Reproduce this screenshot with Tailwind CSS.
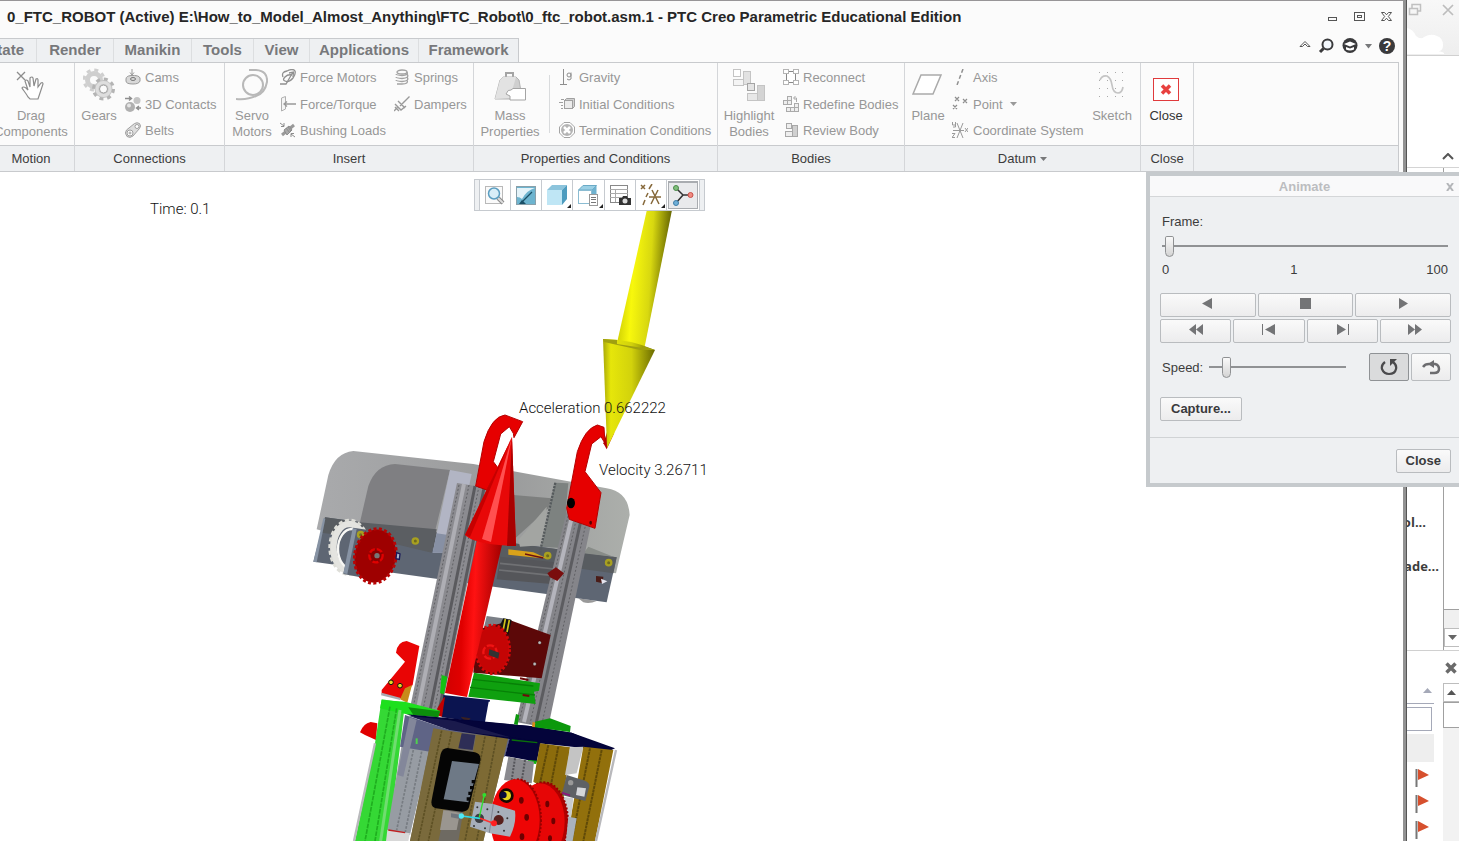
<!DOCTYPE html>
<html lang="en">
<head>
  <meta charset="UTF-8" />
  <meta name="viewport" content="width=device-width, initial-scale=1.0" />
  <title>PTC Creo Parametric Educational Edition</title>
  <script src="https://cdn.jsdelivr.net/npm/@tailwindcss/browser@4"></script>
</head>
<body class="relative flex h-screen overflow-hidden bg-white font-['Liberation_Sans',Arial,sans-serif] text-[13px] leading-4 text-[#3c3c3c]">

  <!-- Creo window -->
  <div class="flex min-w-0 flex-1 flex-col overflow-hidden border-t border-[#979597] bg-[#fbfbfb]">

    <header class="flex h-[37px] shrink-0 items-start justify-between pt-[6px] pl-[7px] pr-[10px]">
      <h1 class="text-[15px] leading-5 font-bold whitespace-nowrap text-[#262626]">0_FTC_ROBOT (Active) E:\How_to_Model_Almost_Anything\FTC_Robot\0_ftc_robot.asm.1 - PTC Creo Parametric Educational Edition</h1>
      <div class="flex gap-[14px] pt-[3px]">
        <button aria-label="Minimize"><svg class="h-[13px] w-[13px]" viewBox="0 0 13 13"><rect x="2.500" y="7.500" width="8" height="3" fill="none" stroke="#555"/></svg></button>
        <button aria-label="Maximize"><svg class="h-[13px] w-[13px]" viewBox="0 0 13 13" fill="none" stroke="#555"><rect x="1.500" y="2.500" width="10" height="8"/><rect x="4.500" y="5.500" width="4" height="2"/></svg></button>
        <button aria-label="Close window"><svg class="h-[13px] w-[13px]" viewBox="0 0 13 13"><path d="M1.500 2.500H4.500L6.500 4.800L8.500 2.500H11.500L8.300 6.500L11.500 10.500H8.500L6.500 8.200L4.500 10.500H1.500L4.700 6.500Z" fill="#fff" stroke="#555"/></svg></button>
      </div>
    </header>

    <!-- Ribbon tabs -->
    <div class="flex h-6 shrink-0 justify-between pr-2">
      <nav class="-ml-3 flex border-t border-r border-[#c8cacd] bg-[#eef0f2] text-[15px] leading-[22px] font-bold text-[#77787b]">
        <a href="#" class="w-[49px] border-r border-[#dcdee0] pr-3 text-right">tate</a>
        <a href="#" class="w-[77px] border-r border-[#dcdee0] text-center">Render</a>
        <a href="#" class="w-[78px] border-r border-[#dcdee0] text-center">Manikin</a>
        <a href="#" class="w-[62px] border-r border-[#dcdee0] text-center">Tools</a>
        <a href="#" class="w-[56px] border-r border-[#dcdee0] text-center">View</a>
        <a href="#" class="w-[109px] border-r border-[#dcdee0] text-center">Applications</a>
        <a href="#" class="w-[99px] text-center">Framework</a>
      </nav>
      <div class="flex h-4 items-center gap-[7px]">
        <button aria-label="Minimize ribbon"><svg class="h-4 w-3" viewBox="0 0 12 16" fill="none" stroke="#555"><path d="M1 8.500L6 3.500L11 8.500H8.500L6 6L3.500 8.500Z"/></svg></button>
        <button aria-label="Search"><svg class="h-4 w-4" viewBox="0 0 16 16" fill="#f3f8fd" stroke="#3a3a3c"><circle cx="9.500" cy="6.500" r="5" stroke-width="2"/><path d="M5.500 10.500L2 14" stroke-width="3"/></svg></button>
        <div class="flex items-center gap-[6px]">
          <button aria-label="Learning"><svg class="h-4 w-[18px]" viewBox="0 0 18 16"><circle cx="9" cy="7.500" r="7.500" fill="#3a3a3c"/><path d="M3 6L9 3.500L15 6L9 8.500ZM5 9L9 10.500L13 9V11.500Q9 13.500 5 11.500Z" fill="#fff"/></svg></button>
          <svg class="h-[5px] w-[7px]" viewBox="0 0 7 5"><path d="M0 0H7L3.500 4.500Z" fill="#77787a"/></svg>
        </div>
        <button aria-label="Help" class="flex h-4 w-4 items-center justify-center rounded-full bg-[#3a3a3c] text-[14px] leading-4 font-bold text-white">?</button>
      </div>
    </div>

    <!-- Ribbon -->
    <div class="mr-1 flex h-[110px] shrink-0 border border-l-0 border-[#c8cacd] whitespace-nowrap text-[#979797] [&_span]:pt-[2px]">
      <section class="-ml-3 flex w-[87px] shrink-0 flex-col border-r border-[#d4d6d9]">
        <div class="flex h-[82px] justify-center">
          <button class="flex w-[86px] flex-col items-center pt-[5px]">
            <svg class="mb-1 h-[34px] w-8" viewBox="0 0 32 34" fill="none" stroke="#8c8c8c"><path d="M2 4L10 12M10 4L2 12" stroke-width="1.300"/><path d="M13 29C11 25 8 22 7 20Q8 18 11 20L13 22L10 13Q11 11 13 13L15 19L15 10Q17 8 18 10L19 18L21 11Q23 10 23 12L23 19L26 15Q28 14 28 16L25 25Q24 28 23 31H15Z" fill="#fff" stroke-width="1.200"/></svg>
            <span>Drag<br>Components</span>
          </button>
        </div>
        <h2 class="h-[26px] border-t border-[#c8cacd] bg-[#eef0f2] text-center leading-[25px] text-[#3c3c3c]">Motion</h2>
      </section>

      <section class="flex w-[150px] shrink-0 flex-col border-r border-[#d4d6d9]">
        <div class="flex h-[82px]">
          <button class="flex w-12 flex-col items-center pt-[5px]">
            <svg class="mb-1 h-[34px] w-8" viewBox="0 0 32 34" fill="none"><circle cx="11" cy="12" r="6.500" stroke="#cfcfcf" stroke-width="5"/><circle cx="11" cy="12" r="10" stroke="#cfcfcf" stroke-width="3" stroke-dasharray="4 3.850"/><circle cx="20.500" cy="21" r="9" fill="#c6c6c6"/><circle cx="20.500" cy="21" r="10" stroke="#b4b4b4" stroke-width="3" stroke-dasharray="4 3.850"/><circle cx="20.500" cy="21" r="6.500" stroke="#dedede" stroke-width="3"/><circle cx="20.500" cy="21" r="4" fill="#fbfbfb" stroke="#a4a4a4"/></svg>
            <span>Gears</span>
          </button>
          <div class="ml-[2px] flex flex-col">
            <button class="flex h-[28px] items-center gap-1"><svg class="h-4 w-4" viewBox="0 0 16 16" fill="none" stroke="#999"><path d="M7 0V5M5 3.500L7 6L9 3.500"/><path d="M1 10Q1 7 6 6.500Q14 6 15 9V12Q14 15 8 15Q1 15 1 12Z" fill="#d8d8d8"/><ellipse cx="8" cy="10" rx="2.500" ry="1.500" stroke="#777"/></svg><span>Cams</span></button>
            <button class="flex h-[26px] items-center gap-1"><svg class="h-4 w-4" viewBox="0 0 16 16" fill="none" stroke="#8e8e8e"><circle cx="12" cy="4.500" r="3.500" fill="#c4c4c4" stroke="none"/><circle cx="5" cy="11" r="5" fill="#b0b0b0" stroke="none"/><circle cx="4" cy="9.500" r="2" fill="#e5e5e5" stroke="none"/><path d="M0 2.500H6M4 0.500L6.500 2.500L4 4.500M16 12H11.500M14 10L11.500 12L14 14" stroke-width="1.400"/></svg><span>3D Contacts</span></button>
            <button class="flex h-[26px] items-center gap-1"><svg class="h-4 w-4" viewBox="0 0 16 16" stroke="#a0a0a0"><path d="M1.500 8L9.500 1.500Q12 0 14.500 1.500Q16.500 4 14.500 6.500L8 14Q5 16.500 2 14.500Q-1 11 1.500 8Z" fill="#ddd"/><circle cx="12" cy="4.500" r="2" fill="#fff"/><circle cx="5" cy="11" r="3" fill="#fff"/><circle cx="5" cy="11" r="1" fill="none"/></svg><span>Belts</span></button>
          </div>
        </div>
        <h2 class="h-[26px] border-t border-[#c8cacd] bg-[#eef0f2] text-center leading-[25px] text-[#3c3c3c]">Connections</h2>
      </section>

      <section class="flex w-[249px] shrink-0 flex-col border-r border-[#d4d6d9]">
        <div class="flex h-[82px]">
          <button class="flex w-[54px] flex-col items-center pt-[5px]">
            <svg class="mb-1 h-[34px] w-8" viewBox="0 0 32 34" fill="none" stroke="#b8b8b8" stroke-width="2"><path d="M13 2H20Q32 3 31 14Q29 25 20 28Q12 32 0 31"/><circle cx="17" cy="17" r="10"/></svg>
            <span>Servo<br>Motors</span>
          </button>
          <div class="ml-px flex w-[114px] flex-col">
            <button class="flex h-[28px] items-center gap-1"><svg class="h-4 w-4" viewBox="0 0 16 16" fill="none" stroke="#909090" stroke-width="1.300"><path d="M3 8Q1 3 7 2Q13 -1 15 2Q16 5 13 9Q9 14 5 12Q2 11 5 8Q8 5 12 6"/><path d="M0 15H6L13 3M9 4L13.500 3L13 8"/></svg><span>Force Motors</span></button>
            <button class="flex h-[26px] items-center gap-1"><svg class="h-4 w-4" viewBox="0 0 16 16" fill="none" stroke="#999"><path d="M1.500 2L5.500 0.500V13L1.500 15Z" fill="#f4f4f4" stroke="#b0b0b0"/><path d="M4 8H16M7 5.500L4 8L7 10.500" stroke-width="1.300"/></svg><span>Force/Torque</span></button>
            <button class="flex h-[26px] items-center gap-1"><svg class="h-4 w-4" viewBox="0 0 16 16" fill="none" stroke="#8c8c8c"><path d="M2 13L14 3" stroke="#999" stroke-width="3"/><path d="M4 8L9 4L12 8L7 13Z" fill="#a8a8a8" stroke="#8c8c8c"/><path d="M6 6L10 11M8 5L11 9"/><path d="M0 1L4 4M4 1V4.500H1M15 15L11 12M11 15V11.500H14"/></svg><span>Bushing Loads</span></button>
          </div>
          <div class="flex flex-col">
            <button class="flex h-[28px] items-center gap-1"><svg class="h-4 w-4" viewBox="0 0 16 16" fill="none" stroke="#a2a2a2" stroke-width="1.300"><ellipse cx="8" cy="3" rx="5" ry="2"/><path d="M13 3Q15 6 8 6.500Q2 6 2 5M13 5Q16 9 8 9.500Q2 9 2 8M13 8Q16 12 8 12.500Q2 12 2 11M13 11Q15 15 8 15H3"/></svg><span>Springs</span></button>
            <button class="flex h-[26px] items-center gap-1"><svg class="h-4 w-4" viewBox="0 0 16 16" fill="none" stroke="#999" stroke-width="1.400"><path d="M15.500 0.500L8 8M4 5L11 12M6 10L10 6M1 8L7 14L12 10M1 11L5 15M0 15L4 11"/></svg><span>Dampers</span></button>
          </div>
        </div>
        <h2 class="h-[26px] border-t border-[#c8cacd] bg-[#eef0f2] text-center leading-[25px] text-[#3c3c3c]">Insert</h2>
      </section>

      <section class="flex w-[244px] shrink-0 flex-col border-r border-[#d4d6d9]">
        <div class="flex h-[82px]">
          <button class="flex w-[72px] flex-col items-center pt-[5px]">
            <svg class="mb-1 h-[34px] w-8" viewBox="0 0 32 34" stroke="#a4a4a4"><path d="M12 9V5H19V9" fill="none" stroke-width="2"/><path d="M6 12L9 9H22L25 12L28 29L20 31H1Z" fill="#cfcfcf" stroke="#b4b4b4"/><path d="M9 9L6 12L1 31L16 30L22 9Z" fill="#e2e2e2" stroke="none"/><path d="M17 22Q14 21 12 26L16 28V32H31.500V20.500H19Z" fill="#fff"/></svg>
            <span>Mass<br>Properties</span>
          </button>
          <div class="mt-3 ml-[3px] h-[58px] w-px bg-[#d9dbdd]"></div>
          <div class="ml-[9px] flex flex-col">
            <button class="flex h-[28px] items-center gap-1"><svg class="h-4 w-4" viewBox="0 0 16 16" fill="none" stroke="#8e8e8e"><path d="M4.500 0V15M1 15.500H8"/><circle cx="10" cy="6" r="2"/><path d="M12 3.500V10Q10 12 8 10"/></svg><span>Gravity</span></button>
            <button class="flex h-[26px] items-center gap-1"><svg class="h-4 w-4" viewBox="0 0 16 16" stroke="#a0a0a0"><path d="M5.500 4.500L7.500 2.500H15.500V10.500L13.500 12.500H5.500Z" fill="#d0d0d0"/><rect x="5.500" y="4.500" width="8" height="8" fill="#ececec"/><path d="M2 3.500H5M0 6.500H4M2 9.500H4M2 12.500H4" fill="none"/></svg><span>Initial Conditions</span></button>
            <button class="flex h-[26px] items-center gap-1"><svg class="h-4 w-4" viewBox="0 0 16 16"><path d="M5 0.500H11L15.500 5V11L11 15.500H5L0.500 11V5Z" fill="#fff" stroke="#a4a4a4"/><circle cx="8" cy="8" r="6" fill="#b4b4b4"/><path d="M5 5L11 11M11 5L5 11" stroke="#fff" stroke-width="2.500"/></svg><span>Termination Conditions</span></button>
          </div>
        </div>
        <h2 class="h-[26px] border-t border-[#c8cacd] bg-[#eef0f2] text-center leading-[25px] text-[#3c3c3c]">Properties and Conditions</h2>
      </section>

      <section class="flex w-[187px] shrink-0 flex-col border-r border-[#d4d6d9]">
        <div class="flex h-[82px]">
          <button class="flex w-[62px] flex-col items-center pt-[5px]">
            <svg class="mb-1 h-[34px] w-8" viewBox="0 0 32 34" stroke="#c4c4c4"><rect x="0.500" y="1.500" width="7" height="7" fill="#fff"/><rect x="10.500" y="3.500" width="7" height="13" fill="#e2e2e2"/><rect x="0.500" y="11.500" width="10" height="6" fill="#f4f4f4"/><rect x="24.500" y="17.500" width="7" height="15" fill="#d4d4d4"/><rect x="14.500" y="25.500" width="10" height="7" fill="#e8e8e8"/><rect x="14.500" y="15.500" width="7" height="7" fill="#e4e4e4" stroke="#a4a4a4"/></svg>
            <span>Highlight<br>Bodies</span>
          </button>
          <div class="ml-[3px] flex flex-col">
            <button class="flex h-[28px] items-center gap-1"><svg class="h-4 w-4" viewBox="0 0 16 16" fill="#fff" stroke="#b4b4b4"><rect x="3.500" y="2.500" width="9" height="11" stroke="#888"/><rect x="0.500" y="0.500" width="5" height="4"/><rect x="10.500" y="0.500" width="5" height="4"/><rect x="0.500" y="11.500" width="5" height="4"/><rect x="10.500" y="11.500" width="5" height="4"/></svg><span>Reconnect</span></button>
            <button class="flex h-[26px] items-center gap-1"><svg class="h-4 w-4" viewBox="0 0 16 16" fill="#eee" stroke="#aaa"><rect x="4.500" y="0.500" width="4" height="4"/><rect x="0.500" y="4.500" width="4" height="4"/><rect x="4.500" y="4.500" width="4" height="4"/><rect x="3.500" y="11.500" width="4" height="4"/><rect x="7.500" y="11.500" width="4" height="4"/><rect x="11.500" y="11.500" width="4" height="4"/><rect x="11.500" y="7.500" width="4" height="4"/><path d="M13.500 6V2H11M12.500 0L10.500 2L12.500 4" fill="none"/></svg><span>Redefine Bodies</span></button>
            <button class="flex h-[26px] items-center gap-1"><svg class="h-4 w-4" viewBox="0 0 16 16" stroke="#a8a8a8"><rect x="3.500" y="1.500" width="5" height="5" fill="#eee"/><rect x="9.500" y="3.500" width="5" height="11" fill="#d0d0d0"/><rect x="2.500" y="9.500" width="7" height="5" fill="#eee"/></svg><span>Review Body</span></button>
          </div>
        </div>
        <h2 class="h-[26px] border-t border-[#c8cacd] bg-[#eef0f2] text-center leading-[25px] text-[#3c3c3c]">Bodies</h2>
      </section>

      <section class="flex w-[236px] shrink-0 flex-col border-r border-[#d4d6d9]">
        <div class="flex h-[82px]">
          <button class="flex w-[46px] flex-col items-center pt-[5px]">
            <svg class="mb-1 h-[34px] w-8" viewBox="0 0 32 34"><path d="M9 7H29L21 26H1Z" fill="#fff" stroke="#aaa" stroke-width="1.500"/></svg>
            <span>Plane</span>
          </button>
          <div class="ml-px flex w-[136px] flex-col">
            <button class="flex h-[28px] items-center gap-[5px]"><svg class="h-4 w-4" viewBox="0 0 16 16"><path d="M11 0L5 16" fill="none" stroke="#909090" stroke-width="1.500" stroke-dasharray="4 2.500"/></svg><span>Axis</span></button>
            <button class="flex h-[26px] items-center gap-[5px]"><svg class="h-4 w-4" viewBox="0 0 16 16" fill="none" stroke="#8e8e8e" stroke-width="1.200"><path d="M3 1L7 5M7 1L3 5M11 3L15 7M15 3L11 7M1 9L5 13M5 9L1 13"/></svg><span>Point</span><svg class="ml-[2px] h-1 w-[7px]" viewBox="0 0 7 4"><path d="M0 0H7L3.500 4Z" fill="#999"/></svg></button>
            <button class="flex h-[26px] items-center gap-[5px]"><svg class="h-4 w-4" viewBox="0 0 16 16" fill="none" stroke="#9a9a9a"><path d="M1 8.500H12M5 1L11 16M11 1L5 16M13 6L16 10M16 6L13 10M0.500 0V3H3.500M3.500 0V5H1M0 11.500H3L0 15.500H3"/></svg><span>Coordinate System</span></button>
          </div>
          <button class="flex w-12 flex-col items-center pt-[5px]">
            <svg class="mb-1 h-[34px] w-8" viewBox="0 0 32 34" fill="none"><path d="M3.500 4V30M11.500 4V30M19.500 4V30M26.500 4V30" stroke="#aaa" stroke-dasharray="1 7"/><path d="M4 12Q6 7 11 8Q15 10 16 17Q17 25 22 25Q26 25 27 19" stroke="#c4c4c4" stroke-width="1.700"/></svg>
            <span>Sketch</span>
          </button>
        </div>
        <h2 class="flex h-[26px] items-center justify-center gap-1 border-t border-[#c8cacd] bg-[#eef0f2] text-[#3c3c3c]">Datum <svg class="h-1 w-[7px]" viewBox="0 0 7 4"><path d="M0 0H7L3.500 4Z" fill="#77787a"/></svg></h2>
      </section>

      <section class="flex w-[53px] shrink-0 flex-col border-r border-[#d4d6d9]">
        <div class="flex h-[82px]">
          <button class="flex w-[50px] flex-col items-center pt-[5px] text-[#333]">
            <svg class="mb-1 h-[34px] w-8" viewBox="0 0 32 34"><rect x="3.500" y="10.500" width="25" height="22" fill="#fff" stroke="#e03a3c"/><path d="M12 17.500L20 25.500M20 17.500L12 25.500" stroke="#e8413f" stroke-width="3.500"/></svg>
            <span>Close</span>
          </button>
        </div>
        <h2 class="h-[26px] border-t border-[#c8cacd] bg-[#eef0f2] text-center leading-[25px] text-[#3c3c3c]">Close</h2>
      </section>

      <div class="flex flex-1 flex-col justify-end">
        <div class="h-[26px] border-t border-[#c8cacd] bg-[#eef0f2]"></div>
      </div>
    </div>

    <!-- Graphics area -->
    <main class="relative min-h-0 flex-1 overflow-hidden bg-white font-['Roboto','Liberation_Sans',sans-serif] text-[15px] leading-5 font-light text-[#111]">

      <svg class="absolute top-0 left-[300px] h-[669px] w-[430px]" viewBox="300 172 430 669">
        <defs>
          <linearGradient id="yshaft" x1="0" x2="1" y1="0" y2="0.150"><stop offset="0" stop-color="#b8b800"/><stop offset="0.350" stop-color="#f8f80c"/><stop offset="0.650" stop-color="#d8d810"/><stop offset="1" stop-color="#5a5a00"/></linearGradient>
          <linearGradient id="ycone" x1="0" x2="1"><stop offset="0" stop-color="#a8a808"/><stop offset="0.150" stop-color="#e6e60a"/><stop offset="0.550" stop-color="#d2d20c"/><stop offset="1" stop-color="#6a6a00"/></linearGradient>
          <linearGradient id="rshaft" x1="0" x2="1" y1="0" y2="0.100"><stop offset="0" stop-color="#c00"/><stop offset="0.350" stop-color="#e00000"/><stop offset="0.550" stop-color="#ff1212"/><stop offset="1" stop-color="#a00000"/></linearGradient>
          <linearGradient id="glass" x1="0" x2="1"><stop offset="0" stop-color="#a9aaac"/><stop offset="0.600" stop-color="#9a9b9c"/><stop offset="1" stop-color="#acafab"/></linearGradient>
        </defs>

        <!-- intake housing -->
        <g transform="translate(300 400) scale(0.33333)">
          <path d="M835 595L850 607Q870 612 890 603Z" fill="#999"/>
          <path d="M50 388L85 225Q105 158 160 153L520 192L920 265Q985 275 989 345L948 520L75 395Z" fill="url(#glass)"/>
          <path d="M75 352L950 472L920 607L40 485Z" fill="#5e6673"/>
          <path d="M75 352L950 472L940 520L65 398Z" fill="#585c60"/>
          <path d="M178 375L205 258Q228 194 285 192L450 210L400 415Z" fill="#7f7f82"/>
          <path d="M178 367L410 388L395 458L150 400Z" fill="#5b5e62"/>
          <path d="M450 210L515 222L465 458L398 458Z" fill="#b2b5c4"/>
          <path d="M410 400L480 410L465 458L398 458Z" fill="#8790a4"/>
          <path d="M640 285L755 295L745 325L640 420Z" fill="#7d7f7e"/>
          <path d="M740 320L735 435L660 440L655 420Z" fill="#a3a5a2"/>
          <path d="M765 248L805 250L800 300L795 445L725 440Z" fill="#7d8280"/>
          <path d="M766 248L718 465" stroke="#555a5c" stroke-width="7" stroke-dasharray="7 3" fill="none"/>
          <path d="M40 485L70 355L76 356L50 487Z" fill="#8793a4"/>
          <ellipse cx="148" cy="442" rx="48" ry="70" fill="#5e6673" stroke="#e4e4e0" stroke-width="20"/>
          <ellipse cx="148" cy="442" rx="59" ry="82" fill="none" stroke="#deded8" stroke-width="8" stroke-dasharray="12 8"/>
          <ellipse cx="156" cy="447" rx="42" ry="60" fill="#5e6673" stroke="#f8f8f5" stroke-width="7"/>
          <path d="M160 383L260 398L225 540L130 522Z" fill="#5b6370"/>
          <path d="M158 385L170 387L142 522L130 520Z" fill="#8793a4"/>
          <g fill="#6f6a20" stroke="#a8a020" stroke-width="7"><circle cx="182" cy="404" r="8"/><circle cx="346" cy="423" r="8"/><circle cx="743" cy="467" r="8"/><circle cx="926" cy="488" r="8"/></g>
          <g transform="rotate(10 226 468)"><ellipse cx="226" cy="468" rx="62" ry="80" fill="#9e0000"/><ellipse cx="226" cy="468" rx="62" ry="82" fill="none" stroke="#b80404" stroke-width="9" stroke-dasharray="9 7"/></g>
          <ellipse cx="228" cy="467" rx="20" ry="20" fill="#8a0000" stroke="#e00000" stroke-width="7" stroke-dasharray="18 6"/>
          <circle cx="231" cy="467" r="8" fill="#777"/>
          <path d="M290 458L300 462L298 478L288 476Z" fill="#aab4c8" stroke="#1a1a5a" stroke-width="4"/>
          <path d="M865 440L940 470L850 460Z" fill="#888c88"/>
          <path d="M600 470L795 490L790 555L590 538Z" fill="#55565a"/>
          <path d="M600 490L792 510M597 510L790 530" stroke="#707174" stroke-width="5"/>
          <path d="M625 448L700 457L740 475L710 473L625 464Z" fill="#d9a21a"/>
          <path d="M675 462L730 474" stroke="#6e1010" stroke-width="4"/>
        </g>

        <!-- right lift rail -->
        <path d="M567 510L591 524L548 728L516 722L545 600Z" fill="#85858a"/>
        <path d="M573 512L524 722" stroke="#b4b4bc" stroke-width="4"/>
        <path d="M581 520L536 724" stroke="#5c5c60" stroke-width="3"/>
        <g fill="none" stroke="#606064" stroke-width="1" stroke-dasharray="2 2"><path d="M569 512L519 722M577 516L530 724M586 523L541 728"/></g>
        <!-- left lift rail -->
        <path d="M457 483L487 488L441 712L410 708Z" fill="#8b8b90"/>
        <path d="M464 484L418 709" stroke="#aeaeb4" stroke-width="4"/>
        <path d="M475 486L430 711M484 488L439 711" stroke="#5a5a5e" stroke-width="3"/>
        <g fill="none" stroke="#606064" stroke-width="1" stroke-dasharray="2 2"><path d="M459 485L413 708M469 485L423 710M479 486L434 712"/></g>

        <!-- hooks -->
        <g transform="translate(300 400) scale(0.33333)">
          <path d="M527 258L552 125Q575 50 615 45L668 65L642 113L640 100L628 80L602 102L580 185L595 205L560 270Z" fill="#e60000" stroke="#b40000" stroke-width="3"/>
          <path d="M800 325L832 155Q855 85 892 75L912 82L915 130L903 110L875 132L855 215L903 278L885 385L808 358Z" fill="#e60000" stroke="#b40000" stroke-width="3"/>
          <path d="M925 85L943 98L920 148L910 130Z" fill="#b40000"/>
          <ellipse cx="813" cy="309" rx="12" ry="16" fill="#000"/>
          <ellipse cx="872" cy="368" rx="4" ry="6" fill="#500"/>
          <path d="M742 520L768 502L792 520L772 543L750 532Z" fill="#7a0d0d"/>
          <path d="M888 528L910 530L908 550L888 545Z" fill="#4a1c18"/><path d="M903 536L922 544L906 552Z" fill="#e5e5ee"/>
        </g>

        <!-- gearbox -->
        <g transform="translate(350 600) scale(0.33333)">
          <path d="M410 48L482 58L480 110L400 90Z" fill="#7b8087"/>
          <path d="M375 90L485 62L602 105L575 235L370 218Z" fill="#5c0808"/>
          <path d="M460 55L485 60L475 105L450 75Z" fill="#111"/><path d="M466 57L460 88M478 60L471 96" stroke="#d2c21a" stroke-width="5"/>
          <ellipse cx="428" cy="148" rx="50" ry="70" fill="#c40505"/>
          <ellipse cx="428" cy="148" rx="51" ry="73" fill="none" stroke="#d40808" stroke-width="8" stroke-dasharray="8 6"/>
          <circle cx="420" cy="156" r="20" fill="none" stroke="#f01414" stroke-width="7" stroke-dasharray="22 6"/>
          <path d="M418 148L448 158L445 176L416 165Z" fill="#333"/>
          <circle cx="569" cy="128" r="5" fill="#bbb" stroke="#200"/><circle cx="554" cy="192" r="5" fill="#bbb" stroke="#200"/>
          <path d="M372 218L570 250L567 272L552 275L557 312L355 290Z" fill="#0fa00f"/>
          <path d="M368 238L550 258M360 262L555 285" stroke="#078007" stroke-width="4"/>
          <path d="M275 225L292 230L282 282L270 280Z" fill="#14c014"/>
          <path d="M510 235L535 240M518 285L538 288" stroke="#6e0a0a" stroke-width="6"/>
          <path d="M280 285L420 300L407 370L275 352Z" fill="#0b1450"/>
          <path d="M262 325L280 295L285 290L276 350L262 347Z" fill="#c00000"/>
          <path d="M416 305L508 316L498 378L405 366Z" fill="#fff"/>
          <path d="M332 350L362 355L350 370Z" fill="#3a2222"/>
          <path d="M95 270L165 185L138 158Q142 125 170 123L208 138L188 255L150 297L95 282Z" fill="#e90505"/>
          <path d="M95 278L150 293L150 300L93 286Z" fill="#a8a8b0"/>
          <path d="M165 265L186 255L172 308L150 298Z" fill="#c88a1a"/>
          <circle cx="123" cy="247" r="7" fill="#e8d820" stroke="#111" stroke-width="3"/><circle cx="150" cy="257" r="7" fill="#e8d820" stroke="#111" stroke-width="3"/>
          <path d="M30 397Q40 370 62 366L82 370L78 420L45 405Z" fill="#e00000"/>

          <!-- chassis -->
          <path d="M95 298L165 308L150 440L115 723H15L75 430Z" fill="#35d835"/>
          <path d="M95 300L165 305L270 332L265 350L180 345L90 325Z" fill="#1ee01e"/>
          <path d="M175 322L270 334L265 352L190 345Z" fill="#0c8e0c"/>
          <path d="M120 320L45 723M140 325L75 723" stroke="#1fae1f" stroke-width="5" stroke-dasharray="14 3"/>
          <path d="M150 330L92 723" stroke="#70dc70" stroke-width="9"/>
          <path d="M155 435L240 450L180 705L112 690Z" fill="#979ca3"/>
          <path d="M190 450L140 690M215 455L165 700" stroke="#777c82" stroke-width="5" stroke-dasharray="8 4"/>
          <path d="M112 690L180 700L175 723H108Z" fill="#d8d8d8"/><path d="M115 690L165 698" stroke="#c02020" stroke-width="4"/>
          <path d="M165 345L300 390L480 412L465 470L240 455L150 440Z" fill="#5f6486"/>
          <path d="M178 352L200 360L160 530L142 525Z" fill="#83879a"/>
          <path d="M200 415V432" stroke="#4fd04f" stroke-width="6"/>
          <path d="M250 390L475 410L400 723H180Z" fill="#6e6a62"/>
          <path d="M250 385L340 400L265 723H180Z" fill="#7a6a3c"/>
          <path d="M378 405L475 412L400 723H325Z" fill="#7d6a34"/>
          <path d="M275 392L205 723M305 396L235 723M405 410L345 723M440 410L380 723" stroke="#5d5024" stroke-width="5" stroke-dasharray="8 3"/>
          <path d="M335 400L376 405L368 450L325 445Z" fill="#2e2e56"/>
          <path d="M170 343L300 355L540 378L665 398L795 445L780 452L565 430L300 390Z" fill="#04043a"/>
          <path d="M175 347L480 380L478 412L300 390Z" fill="#1a1a4c"/>
          <path d="M290 356L540 378L665 398L780 448L480 412Z" fill="#04043a"/>
          <path d="M480 410L572 430L560 485L465 468Z" fill="#04043a"/>
          <path d="M485 420L562 428" stroke="#0a700a" stroke-width="4"/>
          <path d="M498 342L508 345L503 375L492 372ZM555 365L600 355L662 378L660 396L555 382Z" fill="#0c980c"/>
          <path d="M548 365L556 368L554 382L546 380Z" fill="#d88a1a"/>
          <path d="M535 480L562 482L558 492L530 488Z" fill="#10b010"/>
          <path d="M475 470L552 485L545 550L462 540Z" fill="#8a8a8f"/>
          <path d="M495 475L485 540M525 480L515 545" stroke="#55555a" stroke-width="6" stroke-dasharray="6 4"/>
          <path d="M570 430L660 442L640 600L550 545Z" fill="#8c6c0c"/>
          <path d="M660 442L700 440L680 520L645 525Z" fill="#c4c4c4"/>
          <path d="M700 440L790 450L735 723H650Z" fill="#92700c"/>
          <path d="M595 435L570 550M625 440L600 570M720 445L665 723M755 450L700 723" stroke="#604a08" stroke-width="6" stroke-dasharray="9 2"/>
          <path d="M640 590L670 595L655 723H620Z" fill="#c8ccd0"/>
          <path d="M798 450L738 723M75 430L12 723" stroke="#b9b9bc" stroke-width="7" fill="none"/>
          <path d="M650 525L705 542Q720 548 718 560L706 603L635 585Z" fill="#5e6165"/>
          <path d="M682 562L708 565L703 590L678 585Z" fill="#d5d7da"/><circle cx="662" cy="548" r="8" fill="#999"/>
          <path d="M635 578L660 586" stroke="#8a1a7a" stroke-width="5"/>

          <!-- phone -->
          <path d="M292 444L375 457Q394 462 391 482L357 622Q352 636 335 635L258 625Q241 621 245 600L272 462Q277 444 292 444Z" fill="#050505"/>
          <path d="M306 483L387 492L355 607L281 598Z" fill="#6e7986"/>
          <path d="M365 540H376V550H365ZM360 558H371V568H360ZM355 575H366V585H355ZM350 592H361V602H350Z" fill="#050505"/>
          <path d="M280 630L330 638L320 690L270 690Z" fill="#9a9690"/>

          <!-- wheels -->
          <ellipse cx="582" cy="665" rx="72" ry="118" fill="#b00000" stroke="#980000" stroke-width="6" stroke-dasharray="6 5"/>
          <ellipse cx="570" cy="665" rx="74" ry="115" fill="#e60606"/>
          <ellipse cx="505" cy="660" rx="68" ry="122" fill="#a80000" stroke="#980000" stroke-width="6" stroke-dasharray="6 5"/>
          <ellipse cx="495" cy="660" rx="74" ry="122" fill="#ee0505"/>
          <g fill="#6e0000"><ellipse cx="514" cy="601" rx="7" ry="10"/><ellipse cx="530" cy="652" rx="7" ry="10"/><ellipse cx="516" cy="710" rx="7" ry="10"/><ellipse cx="592" cy="612" rx="6" ry="10"/><ellipse cx="610" cy="663" rx="6" ry="10"/><ellipse cx="600" cy="715" rx="6" ry="9"/></g>
          <circle cx="469" cy="587" r="22" fill="#160a00"/><circle cx="469" cy="587" r="14" fill="#e8d41c"/><circle cx="460" cy="585" r="10" fill="#0a0a3a"/>
          <path d="M655 650L680 655L668 723H648Z" fill="#a9b2bd"/>

          <!-- brackets and triad -->
          <path d="M375 605L430 612L495 632Q500 670 480 710L420 700L360 680Z" fill="#a7afba"/>
          <path d="M430 612L418 698" stroke="#7f8792" stroke-width="3"/>
          <circle cx="388" cy="655" r="14" fill="#3d3f44"/><circle cx="446" cy="660" r="15" fill="#58201c"/>
          <g fill="#333"><circle cx="382" cy="622" r="3"/><circle cx="412" cy="628" r="3"/><circle cx="372" cy="678" r="3"/><circle cx="405" cy="685" r="3"/><circle cx="445" cy="636" r="3"/><circle cx="472" cy="655" r="3"/><circle cx="462" cy="692" r="3"/></g>
          <path d="M303 640L335 645L333 658L303 652Z" fill="#70757c"/>
          <path d="M335 648L390 655" stroke="#30d8e8" stroke-width="5"/><circle cx="334" cy="648" r="8" fill="#50e8f4"/>
          <path d="M403 585L388 652" stroke="#30e030" stroke-width="4"/><circle cx="403" cy="585" r="6" fill="#30e030"/>
          <path d="M390 655L430 670" stroke="#ff3030" stroke-width="5"/><circle cx="432" cy="670" r="9" fill="#ff2020"/>
        </g>

        <!-- acceleration arrow -->
        <path d="M477 540L502 545L467 697L445 693Z" fill="url(#rshaft)"/>
        <path d="M512 437L465 535Q475 545 516 546Z" fill="#e80808"/>
        <path d="M512 437L482 539L491 542Z" fill="#ff5050"/>
        <path d="M512 437L465 535L470 537Z" fill="#c60000"/>
        <path d="M512 437L507 546L516 546Z" fill="#a80000"/>

        <!-- velocity arrow -->
        <path d="M648 205H673L644 350L617 343Z" fill="url(#yshaft)"/>
        <path d="M603 339Q630 339 655 350L607 448Z" fill="url(#ycone)"/>
        <path d="M603 339L617 340V344L643 348V346L655 350L640 350L604 342Z" fill="#a0a010"/>
      </svg>

      <span class="absolute top-[27px] left-[150px]">Time: 0.1</span>
      <span class="absolute top-[226px] left-[519px]">Acceleration 0.662222</span>
      <span class="absolute top-[288px] left-[599px]">Velocity 3.26711</span>

      <!-- In-graphics toolbar -->
      <div class="absolute top-[7px] left-[474px] flex h-8 w-[231px] border border-[#c6cacf] bg-white">
        <div class="w-[5px] border-r border-[#c6cacf] bg-[#eef0f2]"></div>
        <button aria-label="Refit" class="flex flex-1 items-center justify-center border-r border-[#c6cacf]"><svg class="h-[22px] w-[22px]" viewBox="0 0 22 22"><rect x="1.500" y="2.500" width="17" height="17" fill="#fafafa" stroke="#b9b9b9"/><path d="M14 14L19 19" stroke="#8a8a8a" stroke-width="4"/><path d="M14 14L19 19" stroke="#ddd" stroke-width="2"/><circle cx="10" cy="9.500" r="5.500" fill="#d8eef8" stroke="#5a9dc0" stroke-width="1.500"/></svg></button>
        <button aria-label="Repaint" class="flex flex-1 items-center justify-center border-r border-[#c6cacf]"><svg class="h-[22px] w-[22px]" viewBox="0 0 22 22"><rect x="1.500" y="2.500" width="19" height="18" fill="#6db4cf" stroke="#8aa0aa"/><path d="M2 4H20Q12 6 7 15Q5 13 2 13Z" fill="#e4f3f9"/><path d="M7 18L17 8" stroke="#1a4f66" stroke-width="1.300"/><path d="M4 20L7 16L11 20Z" fill="#1a4f66"/></svg></button>
        <button aria-label="Display style" class="relative flex flex-1 items-center justify-center border-r border-[#c6cacf]"><svg class="h-[22px] w-[22px]" viewBox="0 0 22 22"><path d="M1 6L6 1H21L16 6Z" fill="#8cc4dc"/><path d="M16 6L21 1V15L16 21Z" fill="#4d9cbf"/><rect x="1" y="6" width="15" height="15" fill="#bfe6f5"/></svg><svg class="absolute right-[1px] bottom-[2px] h-1 w-1" viewBox="0 0 4 4"><path d="M4 0V4H0Z" fill="#222"/></svg></button>
        <button aria-label="Saved orientations" class="relative flex flex-1 items-center justify-center border-r border-[#c6cacf]"><svg class="h-[22px] w-[22px]" viewBox="0 0 22 22"><path d="M1.500 6L6 1.500H19.500L15 6Z" fill="#9bd0e5" stroke="#6aaac6"/><path d="M15 6L19.500 1.500V15L15 19Z" fill="#6fb2cf"/><rect x="1.500" y="6.500" width="13" height="13" fill="#fff" stroke="#8bbcd2"/><rect x="12.500" y="10.500" width="8" height="11" fill="#fff" stroke="#999"/><path d="M14 13.500H19M14 15.500H19M14 18.500H19" stroke="#777"/></svg><svg class="absolute right-[1px] bottom-[2px] h-1 w-1" viewBox="0 0 4 4"><path d="M4 0V4H0Z" fill="#222"/></svg></button>
        <button aria-label="View manager" class="flex flex-1 items-center justify-center border-r border-[#c6cacf]"><svg class="h-[22px] w-[22px]" viewBox="0 0 22 22"><rect x="1.500" y="1.500" width="17" height="17" fill="#fff" stroke="#888"/><path d="M1 5.500H19M1 9.500H19M1 13.500H19M6.500 5V18" stroke="#aaa"/><path d="M10 14H13L14 12H18L19 14H22V21H10Z" fill="#333"/><circle cx="16" cy="17" r="2.500" fill="#ddd"/></svg></button>
        <button aria-label="Datum display" class="relative flex flex-1 items-center justify-center border-r border-[#c6cacf]"><svg class="h-[22px] w-[22px]" viewBox="0 0 22 22" fill="none" stroke="#86683a" stroke-width="1.500"><path d="M1 1L5 5M5 1L1 5M12 0L9 5M8 9L6 13M5 16L3 21M9 13H21M12 6L19 20M18 6L11 20"/></svg><svg class="absolute right-[1px] bottom-[2px] h-1 w-1" viewBox="0 0 4 4"><path d="M4 0V4H0Z" fill="#222"/></svg></button>
        <div class="flex flex-1 p-px">
          <button aria-label="Spin center" class="flex flex-1 items-center justify-center border border-t-2 border-[#a9acb0] bg-[#e9eaec]"><svg class="h-[22px] w-[22px]" viewBox="0 0 22 22"><path d="M4 3L11 10L4 18M11 10H18" fill="none" stroke="#333" stroke-width="1.500"/><circle cx="4" cy="3" r="2.500" fill="#7fbf7a" stroke="#4c8a4a"/><circle cx="4" cy="18" r="2.500" fill="#6fb0d8" stroke="#3f7ea8"/><circle cx="18.500" cy="10" r="2.500" fill="#f08a80" stroke="#c8504a"/></svg></button>
        </div>
        <div class="w-[5px] border-l border-[#c6cacf] bg-[#eef0f2]"></div>
      </div>
    </main>
  </div>

  <div class="w-1 shrink-0 border-r border-[#555] bg-[#929292]"></div>

  <!-- Application behind -->
  <aside class="flex w-[52px] shrink-0 flex-col overflow-hidden bg-white font-['Open_Sans',sans-serif] font-bold">
    <div class="h-14 border-b border-[#d0d0d0] bg-linear-to-b from-[#f8f8f8] to-[#eee]">
      <svg class="h-[55px] w-[52px]" viewBox="0 0 52 55" fill="none"><path d="M0 28Q6 29 9 36Q14 40 17 37Q24 33 30 36Q36 38 36 45Q36 52 30 51Q38 52 37 54H0Z" fill="#fff"/><path d="M2.500 8.500H10.500V14.500H2.500ZM5 8V4.500H13.500V11H11" stroke="#c0c0c0" stroke-width="1.500"/><path d="M36 5L46 15M46 5L36 15" stroke="#bdbdbd" stroke-width="1.700"/></svg>
    </div>
    <div class="flex h-28 shrink-0 items-end justify-end border-b border-[#d4d4d4] pr-[5px] pb-[7px]"><svg class="h-[7px] w-3" viewBox="0 0 12 7"><path d="M1 6L6 1L11 6" fill="none" stroke="#555" stroke-width="2"/></svg></div>
    <div class="flex h-[483px] shrink-0 border-b border-[#d0d0d0]">
      <div class="w-9 pt-[345px] leading-[18px]">
        <p class="flex w-[19px] justify-end">ol...</p>
        <p class="mt-[26px] flex w-8 justify-end">ade...</p>
      </div>
      <div class="flex flex-1 flex-col border-l border-[#a0a0a0] bg-[#f0f0f0]">
        <div class="h-[442px] border-b border-[#a0a0a0] bg-white"></div>
        <button aria-label="Scroll down" class="mt-[18px] flex h-[19px] items-center justify-center border border-r-0 border-[#bdbdbd] bg-white"><svg class="h-[5px] w-[9px]" viewBox="0 0 9 5"><path d="M0 0H9L4.500 5Z" fill="#666"/></svg></button>
        <div class="flex-1 bg-white"></div>
      </div>
    </div>
    <div class="flex min-h-0 flex-1">
      <div class="w-[27px] pt-[37px]">
        <div class="flex h-4 justify-end border-b border-[#a5a9b8] pr-[2px]"><svg class="h-[5px] w-[9px]" viewBox="0 0 9 5"><path d="M0 5H9L4.500 0Z" fill="#a5a9b8"/></svg></div>
        <input aria-label="Filter" class="mt-[3px] block h-6 w-[25px] border border-l-0 border-[#a5a9b8] bg-white">
        <div class="mt-[3px] h-7 bg-[#eee]"></div>
        <svg class="mt-[7px] h-[72px] w-[27px]" viewBox="0 0 27 72"><path d="M9.500 0V18M9.500 26V44M9.500 52V70" stroke="#777" stroke-width="2"/><path d="M11 0L22 6L11 11ZM11 26L22 32L11 37ZM11 52L22 58L11 63Z" fill="#d6502e"/></svg>
      </div>
      <div class="ml-auto flex w-4 flex-col">
        <button aria-label="Close panel" class="flex h-8 items-center justify-center pt-[2px]"><svg class="h-3 w-3" viewBox="0 0 12 12"><path d="M1.500 1.500L10.500 10.500M10.500 1.500L1.500 10.500" stroke="#6a6a6a" stroke-width="3.500"/></svg></button>
        <button aria-label="Scroll up" class="flex h-[19px] shrink-0 items-center justify-center border border-r-0 border-[#bdbdbd] bg-white"><svg class="h-[5px] w-[9px]" viewBox="0 0 9 5"><path d="M0 5H9L4.500 0Z" fill="#555"/></svg></button>
        <div class="h-[26px] border border-r-0 border-[#a0a0a0] bg-white"></div>
        <div class="flex-1 bg-[#f2f2f2]"></div>
      </div>
    </div>
  </aside>

  <!-- Animate dialog -->
  <div role="dialog" aria-label="Animate" class="absolute top-[172px] right-0 w-[313px] border-4 border-r-0 border-[#c6cacd] bg-[#eef0f2]">
    <div class="relative flex h-[21px] items-center justify-center border-b border-[#d4d6d8] bg-[#f9f9fa] pt-px font-bold text-[#bcbdc0]">
      Animate
      <button aria-label="Close dialog" class="absolute right-[5px]"><svg class="h-2 w-2" viewBox="0 0 8 8"><path d="M1 0L7 8M7 0L1 8" stroke="#b4b6b9" stroke-width="2"/></svg></button>
    </div>
    <div class="px-2 pt-[17px]">
      <div class="px-1 pr-[3px]">
        <label for="frame">Frame:</label>
        <input id="frame" type="range" min="0" max="100" value="1" class="mt-[6px] block h-[21px] w-full appearance-none bg-[linear-gradient(#909294,#909294)] bg-[length:100%_2px] bg-[position:0_9px] bg-no-repeat [&::-webkit-slider-thumb]:h-[21px] [&::-webkit-slider-thumb]:w-[9px] [&::-webkit-slider-thumb]:appearance-none [&::-webkit-slider-thumb]:rounded-[2px_2px_5px_5px] [&::-webkit-slider-thumb]:border [&::-webkit-slider-thumb]:border-[#8f9193] [&::-webkit-slider-thumb]:bg-[linear-gradient(#fafafa,#d4d4d4)]">
        <div class="mt-[5px] flex justify-between"><span>0</span><span class="pr-2">1</span><span>100</span></div>
      </div>
      <div class="mt-[15px] ml-[2px] flex gap-[2px]">
        <button aria-label="Play backward" class="flex h-6 flex-1 items-center justify-center rounded-[2px] border border-[#b9bcbf] bg-linear-to-b from-[#fafafa] to-[#ececed]"><svg class="-mt-1 h-[11px] w-[11px]" viewBox="0 0 11 11"><path d="M10 0V11L0 5.500Z" fill="#737476"/></svg></button>
        <button aria-label="Stop" class="flex h-6 flex-1 items-center justify-center rounded-[2px] border border-[#b9bcbf] bg-linear-to-b from-[#fafafa] to-[#ececed]"><svg class="-mt-1 h-[11px] w-[11px]" viewBox="0 0 11 11"><rect width="11" height="11" fill="#737476"/></svg></button>
        <button aria-label="Play" class="flex h-6 flex-1 items-center justify-center rounded-[2px] border border-[#b9bcbf] bg-linear-to-b from-[#fafafa] to-[#ececed]"><svg class="-mt-1 h-[11px] w-[11px]" viewBox="0 0 11 11"><path d="M1 0V11L10 5.500Z" fill="#737476"/></svg></button>
      </div>
      <div class="mt-[2px] ml-[2px] flex gap-[2px]">
        <button aria-label="Fast rewind" class="flex h-6 flex-1 items-center justify-center rounded-[2px] border border-[#b9bcbf] bg-linear-to-b from-[#fafafa] to-[#ececed]"><svg class="-mt-1 h-[11px] w-[14px]" viewBox="0 0 14 11"><path d="M7 0V11L0 5.500ZM14 0V11L7 5.500Z" fill="#737476"/></svg></button>
        <button aria-label="First frame" class="flex h-6 flex-1 items-center justify-center rounded-[2px] border border-[#b9bcbf] bg-linear-to-b from-[#fafafa] to-[#ececed]"><svg class="-mt-1 h-[11px] w-[13px]" viewBox="0 0 13 11"><path d="M0 0H1V11H0ZM13 0V11L3 5.500Z" fill="#737476"/></svg></button>
        <button aria-label="Last frame" class="flex h-6 flex-1 items-center justify-center rounded-[2px] border border-[#b9bcbf] bg-linear-to-b from-[#fafafa] to-[#ececed]"><svg class="-mt-1 h-[11px] w-[13px]" viewBox="0 0 13 11"><path d="M12 0H13V11H12ZM1 0V11L10 5.500Z" fill="#737476"/></svg></button>
        <button aria-label="Fast forward" class="flex h-6 flex-1 items-center justify-center rounded-[2px] border border-[#b9bcbf] bg-linear-to-b from-[#fafafa] to-[#ececed]"><svg class="-mt-1 h-[11px] w-[14px]" viewBox="0 0 14 11"><path d="M0 0V11L7 5.500ZM7 0V11L14 5.500Z" fill="#737476"/></svg></button>
      </div>
      <div class="mt-[10px] flex items-center">
        <label for="speed" class="w-[47px] pt-[2px] pl-1">Speed:</label>
        <input id="speed" type="range" min="0" max="100" value="10" class="ml-1 block h-[21px] w-[137px] appearance-none bg-[linear-gradient(#909294,#909294)] bg-[length:100%_2px] bg-[position:0_9px] bg-no-repeat [&::-webkit-slider-thumb]:h-[21px] [&::-webkit-slider-thumb]:w-[9px] [&::-webkit-slider-thumb]:appearance-none [&::-webkit-slider-thumb]:rounded-[2px_2px_5px_5px] [&::-webkit-slider-thumb]:border [&::-webkit-slider-thumb]:border-[#8f9193] [&::-webkit-slider-thumb]:bg-[linear-gradient(#fafafa,#d4d4d4)]">
        <button aria-label="Loop" class="ml-auto flex h-7 w-10 items-center justify-center rounded-[2px] border border-[#8f9295] bg-[#dadbdc]"><svg class="h-[18px] w-[18px]" viewBox="0 0 18 18"><path d="M5 4Q1 7 2 11Q4 16 9 16Q15 16 16 11Q17 7 13 4" fill="none" stroke="#4a4a4c" stroke-width="2.200"/><path d="M10 1H17L10 8Z" fill="#4a4a4c"/></svg></button>
        <button aria-label="Reverse at end" class="ml-[2px] flex h-7 w-10 items-center justify-center rounded-[2px] border border-[#b9bcbf] bg-linear-to-b from-[#fafafa] to-[#ececed]"><svg class="h-[18px] w-[19px]" viewBox="0 0 19 18"><path d="M1 9Q3 6 7 6H13Q17 7 17 11Q17 15 12 15H8" fill="none" stroke="#6c6c6f" stroke-width="2.500"/><path d="M12 2V10L6 6Z" fill="#6c6c6f"/></svg></button>
      </div>
      <button class="mt-4 ml-[2px] block h-6 rounded-[2px] border border-[#b9bcbf] bg-linear-to-b from-[#fafafa] to-[#ececed] px-[10px] font-bold text-[#3a3a3c]">Capture...</button>
    </div>
    <div class="mt-4 flex h-[46px] items-start justify-end border-t border-[#d0d3d5] pt-[11px] pr-2">
      <button class="h-6 rounded-[2px] border border-[#b9bcbf] bg-linear-to-b from-[#fafafa] to-[#ececed] px-[9px] font-bold text-[#3a3a3c]">Close</button>
    </div>
  </div>
</body>
</html>
